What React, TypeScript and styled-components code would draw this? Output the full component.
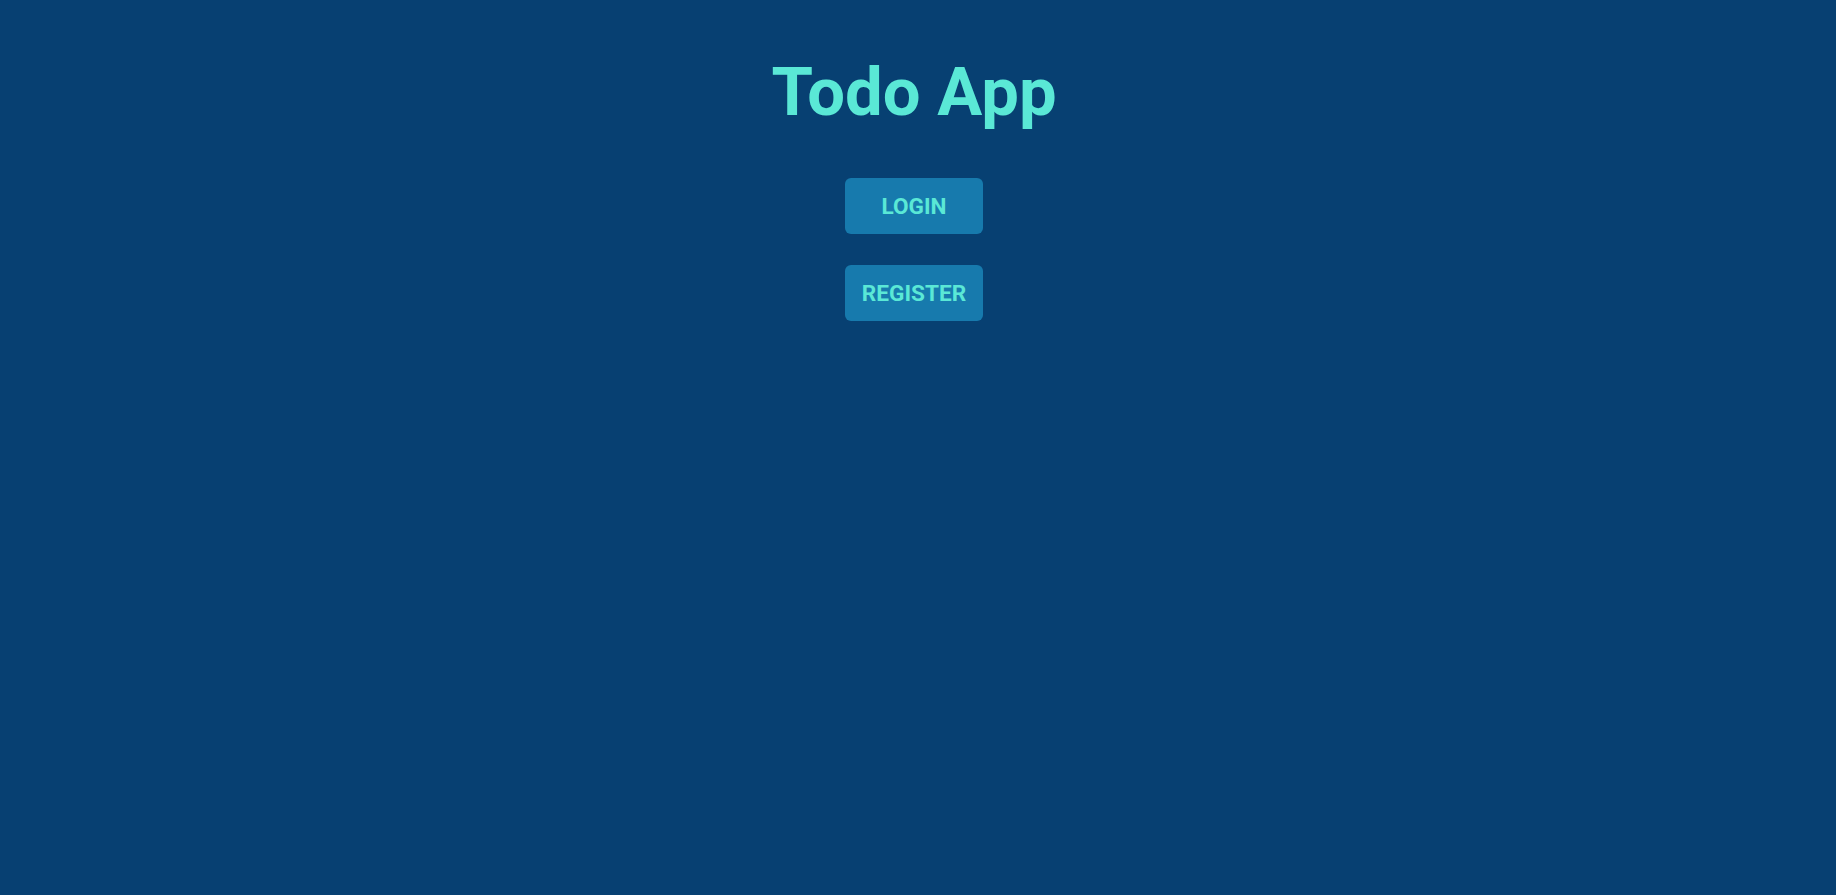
import React from "react";
import styled, { createGlobalStyle } from "styled-components";

const GlobalStyle = createGlobalStyle`
  html, body { margin: 0; padding: 0; background: #074072; }
  body { font-family: Roboto, "Liberation Sans", sans-serif; }
`;

const Page = styled.main`
  min-height: 895px;
  background: #074072;
  display: flex;
  flex-direction: column;
  align-items: center;
  padding: 52px 8px 0 0;
  box-sizing: border-box;
`;

const Title = styled.h1`
  margin: 0;
  font-family: Roboto, "Liberation Sans", sans-serif;
  font-weight: 700;
  font-size: 67px;
  line-height: 80px;
  color: #5ae8d6;
`;

const Actions = styled.div`
  display: flex;
  flex-direction: column;
  gap: 31px;
  margin-top: 46px;
`;

const Button = styled.button`
  width: 138px;
  height: 56px;
  border: none;
  border-radius: 6px;
  background: #177aad;
  color: #5ae8d6;
  font-family: Roboto, "Liberation Sans", sans-serif;
  font-weight: 700;
  font-size: 22.6px;
  text-transform: uppercase;
  cursor: pointer;
  padding: 0 14px;
`;

export default function App() {
  return (
    <>
      <GlobalStyle />
      <Page>
        <Title>Todo App</Title>
        <Actions>
          <Button>Login</Button>
          <Button>Register</Button>
        </Actions>
      </Page>
    </>
  );
}
